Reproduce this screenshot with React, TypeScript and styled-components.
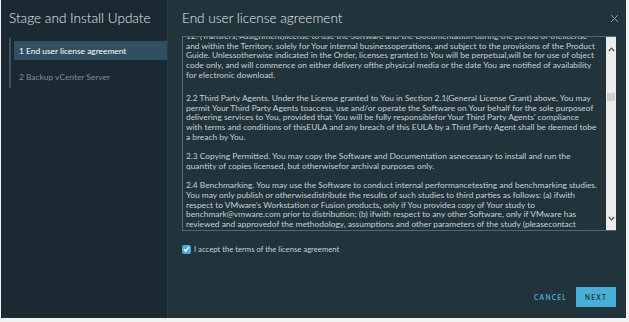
import React, { useLayoutEffect, useRef } from 'react';
import styled, { createGlobalStyle } from 'styled-components';

const colors = {
  page: '#f2f2f2',
  nav: '#1b2a32',
  navEdge: '#2b3c45',
  panel: '#21333b',
  active: '#324f62',
  rail: '#3f525c',
  title: '#e6eaec',
  text: '#c9d1d5',
  muted: '#7d8d95',
  blue: '#49afd9',
  scroll: '#ececec',
};

const font = "Lato, 'Liberation Sans', Arial, sans-serif";

const eula: string[][] = [
  [
    '12. (Transfers, Assignment)license to use the Software and the Documentation during the period of thelicense',
    'and within the Territory, solely for Your internal businessoperations, and subject to the provisions of the Product',
    'Guide. Unlessotherwise indicated in the Order, licenses granted to You will be perpetual,will be for use of object',
    'code only, and will commence on either delivery ofthe physical media or the date You are notified of availability',
    'for electronic download.',
  ],
  [
    '2.2 Third Party Agents. Under the License granted to You in Section 2.1(General License Grant) above, You may',
    'permit Your Third Party Agents toaccess, use and/or operate the Software on Your behalf for the sole purposeof',
    'delivering services to You, provided that You will be fully responsiblefor Your Third Party Agents\u2019 compliance',
    'with terms and conditions of thisEULA and any breach of this EULA by a Third Party Agent shall be deemed tobe',
    'a breach by You.',
  ],
  [
    '2.3 Copying Permitted. You may copy the Software and Documentation asnecessary to install and run the',
    'quantity of copies licensed, but otherwisefor archival purposes only.',
  ],
  [
    '2.4 Benchmarking. You may use the Software to conduct internal performancetesting and benchmarking studies.',
    'You may only publish or otherwisedistribute the results of such studies to third parties as follows: (a) ifwith',
    'respect to VMware\u2019s Workstation or Fusion products, only if You providea copy of Your study to',
    'benchmark@vmware.com prior to distribution; (b) ifwith respect to any other Software, only if VMware has',
    'reviewed and approvedof the methodology, assumptions and other parameters of the study (pleasecontact',
    'VMware at benchmark@vmware.com to request such review and approval) prior to such publication.',
  ],
];

const steps = ['1 End user license agreement', '2 Backup vCenter Server'];

function App() {
  const viewRef = useRef<HTMLDivElement>(null);

  useLayoutEffect(() => {
    if (viewRef.current) viewRef.current.scrollTop = 5;
  }, []);

  return (
    <>
      <GlobalStyle />
      <Frame>
        <Sidebar>
          <Title>Stage and Install Update</Title>
          <StepList>
            {steps.map((s, i) => (
              <Step key={s} active={i === 0}>
                {s}
              </Step>
            ))}
          </StepList>
        </Sidebar>

        <Main>
          <Header>
            <Title>End user license agreement</Title>
            <Close aria-label='close'>
              <svg width='9' height='9' viewBox='0 0 9 9'>
                <path d='M1 1 L8 8 M8 1 L1 8' stroke='#8d9ba2' strokeWidth='1' fill='none' />
              </svg>
            </Close>
          </Header>

          <LicenseBox>
            <Viewport ref={viewRef}>
              {eula.map((para, i) => (
                <Para key={i} first={i === 0}>
                  {para.map((line) => (
                    <Line key={line}>{line}</Line>
                  ))}
                </Para>
              ))}
            </Viewport>
            <ScrollBar>
              <ArrowBtn>
                <svg width='7' height='5' viewBox='0 0 7 5'>
                  <path d='M0.8 4 L3.5 1.2 L6.2 4' stroke='#4d4d4d' strokeWidth='1.2' fill='none' />
                </svg>
              </ArrowBtn>
              <Track>
                <Thumb />
              </Track>
              <ArrowBtn>
                <svg width='7' height='5' viewBox='0 0 7 5'>
                  <path d='M0.8 1 L3.5 3.8 L6.2 1' stroke='#4d4d4d' strokeWidth='1.2' fill='none' />
                </svg>
              </ArrowBtn>
            </ScrollBar>
          </LicenseBox>

          <Accept>
            <Check>
              <svg width='7' height='6' viewBox='0 0 7 6'>
                <path d='M1 3.2 L2.8 5 L6 1' stroke='#fff' strokeWidth='1.4' fill='none' />
              </svg>
            </Check>
            I accept the terms of the license agreement
          </Accept>

          <Footer>
            <FlatButton>CANCEL</FlatButton>
            <PrimaryButton>NEXT</PrimaryButton>
          </Footer>
        </Main>
      </Frame>
    </>
  );
}

const GlobalStyle = createGlobalStyle`
  html, body {
    margin: 0;
    background: ${colors.page};
  }
  * {
    box-sizing: border-box;
  }
`;

const Frame = styled.div`
  display: flex;
  width: 625px;
  height: 318px;
  margin-left: 1px;
  font-family: ${font};
`;

const Sidebar = styled.aside`
  width: 167px;
  flex-shrink: 0;
  background: ${colors.nav};
  border-right: 1px solid ${colors.navEdge};
  padding: 8px 0 0 8px;
  display: flex;
  flex-direction: column;
`;

const Title = styled.h1`
  margin: 0;
  font-size: 13.6px;
  line-height: 20px;
  font-weight: 300;
  color: ${colors.title};
  white-space: nowrap;
`;

const StepList = styled.ul`
  list-style: none;
  margin: 10px 0 0 0;
  padding: 3px 0 2px 3px;
  border-left: 2px solid ${colors.rail};
  display: flex;
  flex-direction: column;
  gap: 7px;
`;

const Step = styled.li<{ active?: boolean }>`
  height: 19px;
  display: flex;
  align-items: center;
  padding-left: 5px;
  font-size: 8.4px;
  color: ${(p) => (p.active ? '#ffffff' : colors.muted)};
  background: ${(p) => (p.active ? colors.active : 'transparent')};
  white-space: nowrap;
`;

const Main = styled.main`
  flex: 1;
  background: ${colors.panel};
  padding: 8px 10px 11px 14px;
  display: flex;
  flex-direction: column;
`;

const Header = styled.div`
  display: flex;
  align-items: center;
  justify-content: space-between;
  height: 20px;
`;

const Close = styled.button`
  border: 0;
  background: none;
  padding: 0;
  margin-right: -3px;
  display: flex;
`;

const LicenseBox = styled.div`
  margin-top: 8px;
  height: 195px;
  display: flex;
  border: 1px solid #56686f;
  border-right: 0;
`;

const Viewport = styled.div`
  flex: 1;
  overflow: hidden;
  padding: 0 3px;
  font-size: 8.4px;
  line-height: 9.7px;
  color: ${colors.text};
`;

const Para = styled.div<{ first?: boolean }>`
  margin-bottom: ${(p) => (p.first ? '13.5px' : '9.7px')};
`;

const Line = styled.div`
  white-space: nowrap;
`;

const ScrollBar = styled.div`
  width: 10px;
  background: ${colors.scroll};
  display: flex;
  flex-direction: column;
`;

const ArrowBtn = styled.div`
  height: 24px;
  display: flex;
  align-items: center;
  justify-content: center;
`;

const Track = styled.div`
  flex: 1;
  padding: 32px 1px 0 1px;
`;

const Thumb = styled.div`
  height: 8px;
  background: #cfcfcf;
`;

const Accept = styled.label`
  margin-top: 13px;
  display: flex;
  align-items: center;
  gap: 3px;
  font-size: 7.7px;
  color: ${colors.text};
`;

const Check = styled.span`
  width: 9px;
  height: 9px;
  border-radius: 2px;
  background: ${colors.blue};
  display: flex;
  align-items: center;
  justify-content: center;
`;

const Footer = styled.div`
  margin-top: auto;
  display: flex;
  justify-content: flex-end;
  align-items: center;
  gap: 10px;
`;

const ButtonBase = styled.button`
  font-family: ${font};
  font-size: 6.5px;
  font-weight: 700;
  letter-spacing: 1.3px;
  height: 20px;
  border: 0;
  padding: 0;
`;

const FlatButton = styled(ButtonBase)`
  background: none;
  color: ${colors.blue};
  width: 32px;
`;

const PrimaryButton = styled(ButtonBase)`
  background: ${colors.blue};
  color: ${colors.panel};
  width: 40px;
`;

export default App;
